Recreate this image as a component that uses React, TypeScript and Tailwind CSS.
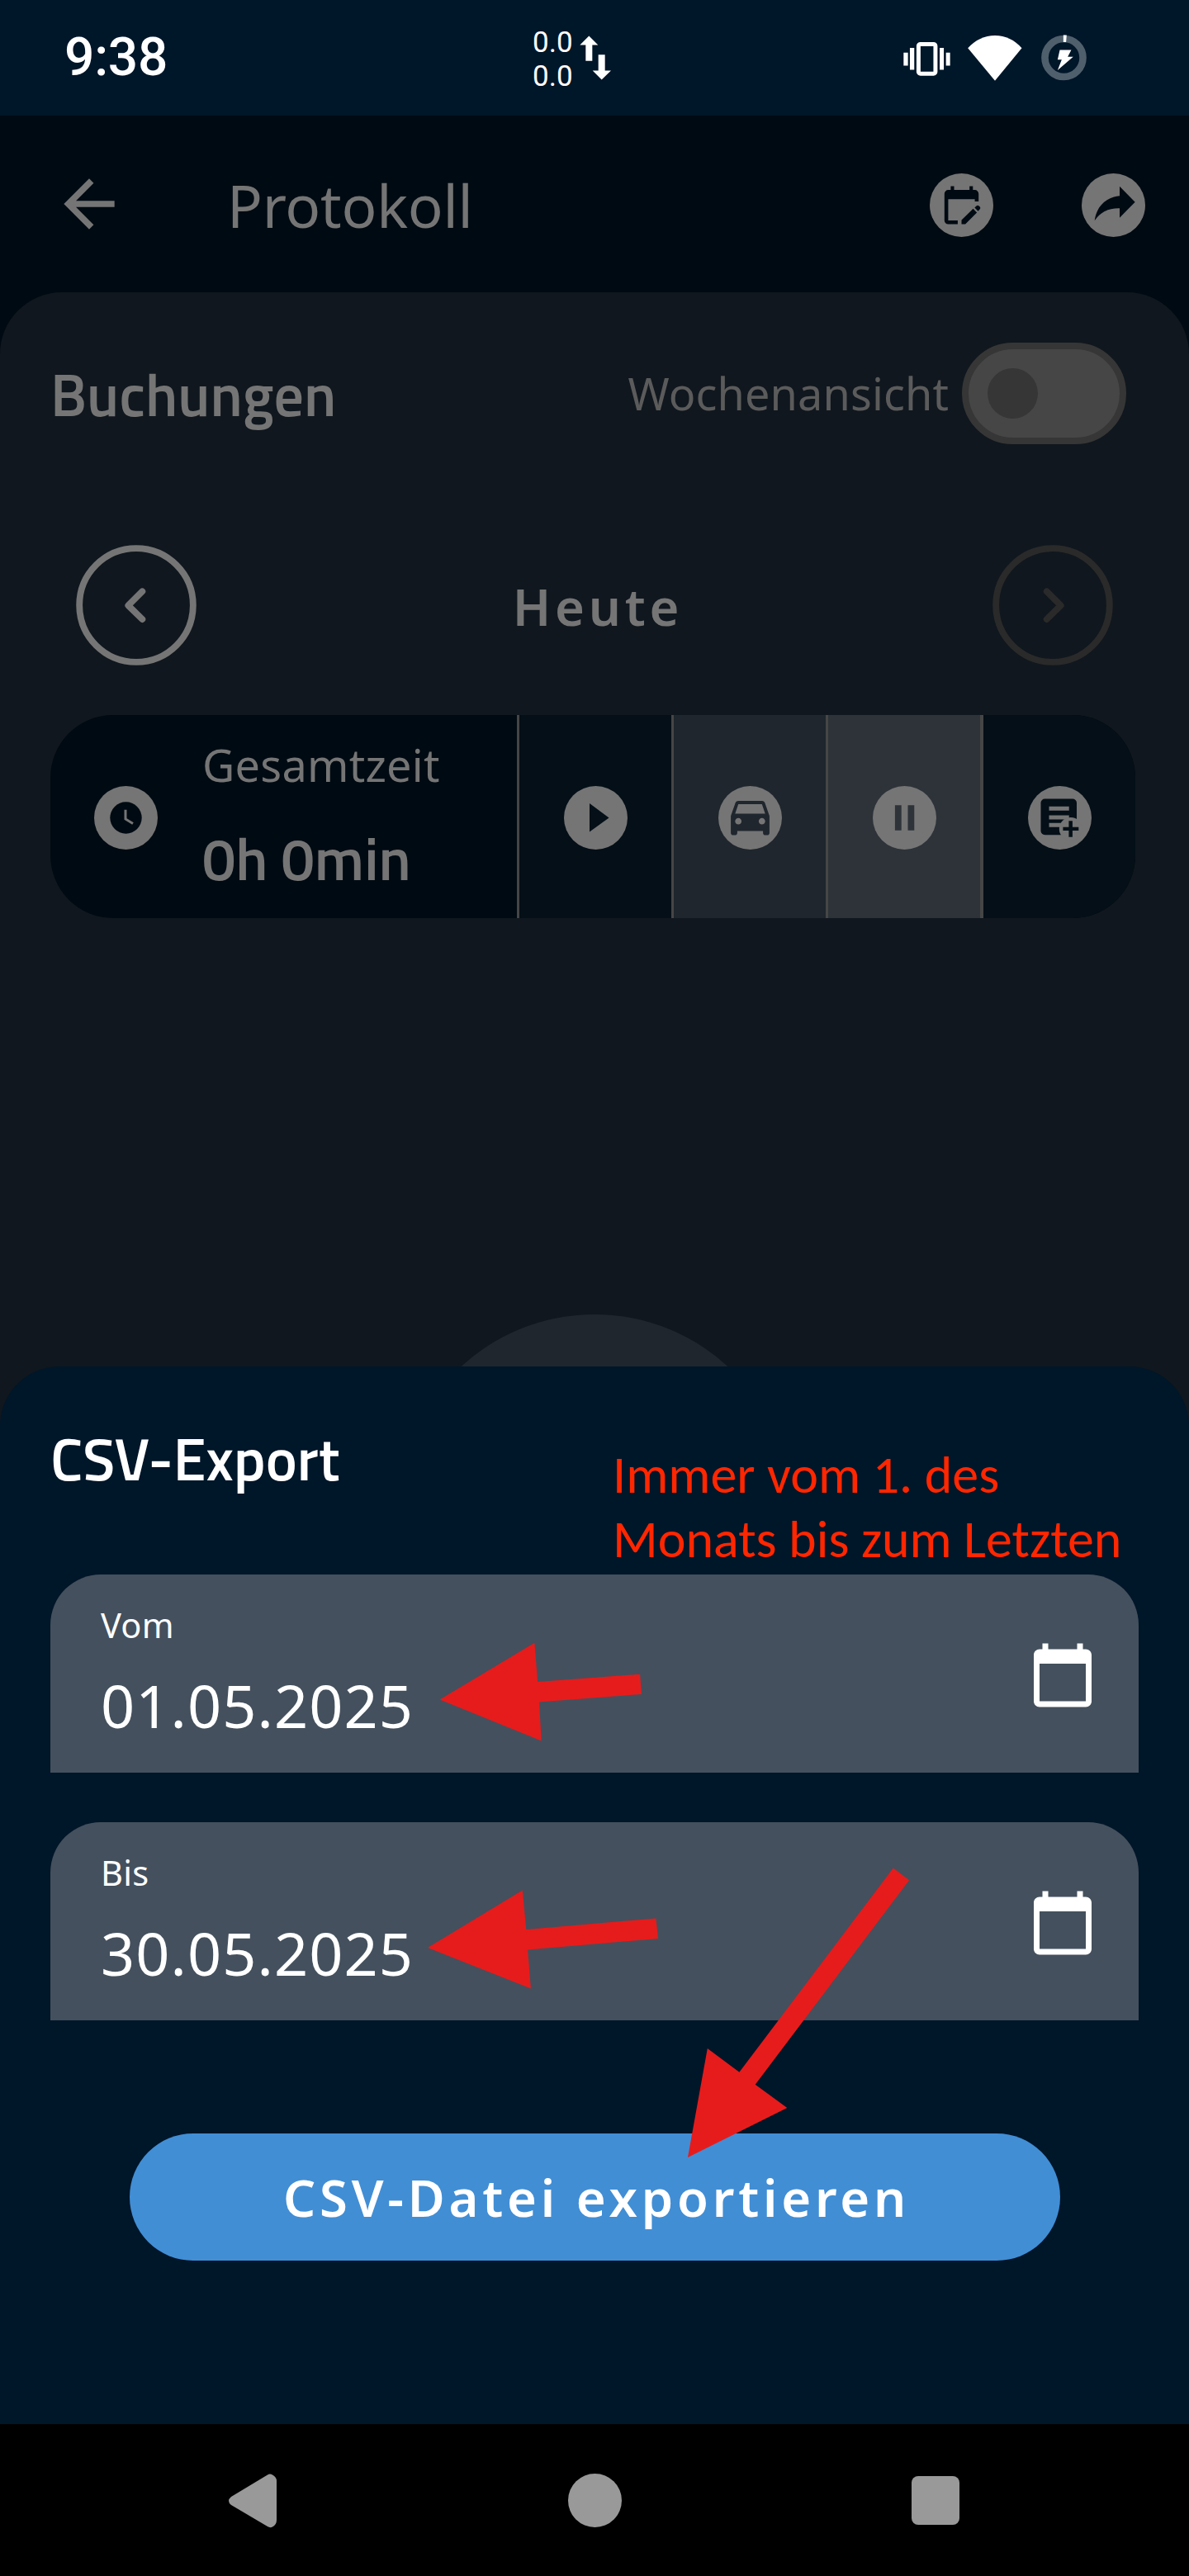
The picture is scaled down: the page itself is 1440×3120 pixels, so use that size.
import type { ReactNode } from "react";

const noto = "font-['Noto_Sans',sans-serif]";
const titillium = "font-['Titillium_Web',Roboto,sans-serif] font-semibold";

function StatusBar() {
  return (
    <div className="flex h-[140px] items-center bg-[#001629] font-['Roboto',sans-serif] text-white">
      <div className="w-[645px] pl-[78px] text-[64px] leading-none font-medium tracking-[-0.25px]">9:38</div>
      <div className="w-[57px] pt-[3px] text-[35px] leading-[41px]">
        <div>0.0</div>
        <div>0.0</div>
      </div>
      <svg className="h-[54px] w-[38px]" viewBox="216 68 114 161" fill="#fff">
        <path d="M250 69l33 33h-21v58h-24v-58h-21zM296 228l-33-33h21v-58h24v58h22z" />
      </svg>
      <div className="ml-auto flex items-center pr-[124px]">
        <svg className="mr-[21px] h-[55px] w-[57px]" viewBox="98 66 172 166" fill="#fff">
          <rect x="153.500" y="97.500" width="62" height="108" rx="7" fill="none" stroke="#fff" strokeWidth="15" />
          <path d="M122 111h16v80h-16zM99 129h16v47h-16zM231 111h15v80h-15zM254 129h15v47h-15z" />
        </svg>
        <svg className="mr-[23px] h-[55px] w-[66px]" viewBox="333 66 198 166" fill="#fff">
          <path d="M432 231L333 112C360 82 394 66 432 66s72 16 98 46z" />
        </svg>
        <svg className="h-[56px] w-[55px]" viewBox="600 66 166 168" fill="#fff">
          <circle cx="683" cy="150" r="69.500" fill="none" stroke="#505f6c" strokeWidth="26" />
          <path d="M681 67h12l-2 26h-10zM668 121h42l-13 25h20l-57 49 15-38h-15z" />
        </svg>
      </div>
    </div>
  );
}

/** Grey disc whose glyph is drawn in a 77-unit box centred on the origin. */
function Disc({ children }: { children: ReactNode }) {
  return (
    <svg className="size-[77px] shrink-0" viewBox="-38.5 -38.5 77 77">
      <circle r="38.500" fill="#757575" />
      {children}
    </svg>
  );
}

function AppBar() {
  return (
    <div className="flex h-[214px] items-center pr-[53px] pl-[62px]">
      <svg className="size-[92px]" viewBox="0 0 24 24" fill="#757575">
        <path d="M20 11H7.830l5.590-5.590L12 4l-8 8 8 8 1.410-1.410L7.830 13H20z" />
      </svg>
      <h1 className={`${noto} mt-[3px] ml-[121px] text-[71px] leading-none tracking-[-0.25px] text-[#757575]`}>Protokoll</h1>
      <div className="mt-[3px] ml-auto flex gap-[107px]">
        <Disc>
          <g transform="translate(-27.600 -27.600) scale(2.300)" fill="#000a12">
            <path d="M10 22H5a2 2 0 0 1-2-2V6a2 2 0 0 1 2-2h1.300V2h1.800v2h8.100V2H18v2h1a2 2 0 0 1 2 2v4h-2V8.900H5V20h5z" />
            <path d="M12 22v-2.200l6.100-5.900 2 2L14 22zM18.900 13.300l.9-.9q.7-.6 1.400 0l.4.4q.6.7 0 1.400l-.9.900z" />
          </g>
        </Disc>
        <Disc>
          <g transform="translate(-38.500 -38.500) scale(.3333)">
            <path fill="#000a12" d="M194 104L138 47V82C100 86 55 110 47 172C68 140 98 126 138 127V161z" />
          </g>
        </Disc>
      </div>
    </div>
  );
}

function RoundButton({ color, flip }: { color: string; flip?: boolean }) {
  return (
    <svg className={flip ? "size-[146px] -scale-x-100" : "size-[146px]"} viewBox="-219 -219 438 438" fill="none" stroke={color} strokeWidth="23.500">
      <circle r="206.500" />
      <path d="M22-50L-29 1l51 50" strokeLinecap="round" strokeLinejoin="round" />
    </svg>
  );
}

function SummaryCard() {
  return (
    <div className="mt-[60px] mr-[65px] ml-[61px] flex h-[246px] overflow-hidden rounded-[76px] bg-[#000a12]">
      <div className="flex w-[565px] shrink-0 items-center pt-[2px] pl-[53px]">
        <Disc>
          <circle r="19.200" fill="#000a12" />
          <path d="M-.5-9.700V1.500L8.500 7" fill="none" stroke="#757575" strokeWidth="3" />
        </Disc>
        <div className="-mt-[15px] ml-[54px] text-[#757575]">
          <div className={`${noto} text-[54px] leading-[113px] tracking-[0.25px]`}>Gesamtzeit</div>
          <div className={`${titillium} text-[72px] leading-[113px]`}>0h 0min</div>
        </div>
      </div>
      <div className="flex w-[187px] shrink-0 items-center justify-center border-l-[3px] border-[#464646] bg-[#040f17] pt-[2px]">
        <Disc>
          <path d="M-7.500-17.500V17L16 0z" fill="#040f17" />
        </Disc>
      </div>
      <div className="flex w-[187px] shrink-0 items-center justify-center border-l-[3px] border-[#464646] bg-[#1f262d] pt-[2px]">
        <Disc>
          <g transform="translate(-31.200 -33.500) scale(2.600)">
            <path
              fill="#1f262d"
              d="M18.920 6.010C18.720 5.420 18.160 5 17.500 5h-11c-.66 0-1.210.42-1.420 1.010L3 12v8c0 .55.45 1 1 1h1c.55 0 1-.45 1-1v-1h12v1c0 .55.45 1 1 1h1c.55 0 1-.45 1-1v-8l-2.080-5.990zM6.500 16c-.83 0-1.500-.67-1.500-1.500S5.670 13 6.500 13s1.500.67 1.500 1.500S7.330 16 6.500 16zm11 0c-.83 0-1.500-.67-1.500-1.500s.67-1.500 1.500-1.500 1.500.67 1.500 1.500-.67 1.500-1.500 1.500zM5 11l1.500-4.500h11L19 11H5z"
            />
          </g>
        </Disc>
      </div>
      <div className="flex w-[191px] shrink-0 items-center justify-center border-r-4 border-l-[3px] border-[#464646] bg-[#2d3339] pt-[2px]">
        <Disc>
          <path d="M-11.600-15.300h7.800v30.600h-7.800zM4-15.300h7.800v30.600H4z" fill="#2d3339" />
        </Disc>
      </div>
      <div className="flex flex-1 items-center bg-[#040f17] pt-[2px] pl-[54px]">
        <Disc>
          <rect x="-23" y="-23" width="43.500" height="43.700" rx="5" fill="#040f17" />
          <path d="M-13-13.700h24.200v5H-13zM-13-3h24.200v5H-13zM-13 6.300H2v5h-15z" fill="#757575" />
          <circle cx="13.300" cy="13.500" r="14" fill="#757575" />
          <path d="M10.900 3.700h4.500v7.600h7.400v4.200h-7.400v7.800h-4.500v-7.800H3.900v-4.200h7z" fill="#040f17" />
        </Disc>
      </div>
    </div>
  );
}

function DateField({ label, value }: { label: string; value: string }) {
  return (
    <div className={`${noto} mx-[61px] flex h-[240px] items-center justify-between rounded-t-[61px] bg-[#44505d] pr-[50px] pl-[61px] text-white`}>
      <div>
        <div className="text-[41.5px] leading-[68px] tracking-[0.3px]">{label}</div>
        <div className="mt-[18px] mb-[10px] text-[72px] leading-[90px] tracking-[1.1px]">{value}</div>
      </div>
      <svg className="mt-[3px] size-[84px]" viewBox="0 0 24 24" fill="#fff">
        <path d="M20 3h-1V1h-2v2H7V1H5v2H4c-1.100 0-2 .9-2 2v16c0 1.100.9 2 2 2h16c1.100 0 2-.9 2-2V5c0-1.100-.9-2-2-2zm0 18H4V8h16v13z" />
      </svg>
    </div>
  );
}

function ExportSheet() {
  return (
    <section className="relative h-[1281px] rounded-t-[72px] bg-[#001629]">
      <h2 className={`${titillium} h-[252px] pt-[66px] pl-[61px] text-[72px] leading-[90px] text-white`}>CSV-Export</h2>
      <DateField label="Vom" value="01.05.2025" />
      <div className="h-[60px]" />
      <DateField label="Bis" value="30.05.2025" />
      <button
        className={`${noto} mx-auto mt-[137px] block h-[154px] w-[1127px] rounded-full bg-[#418ed5] pl-[5px] text-[61.5px] font-semibold tracking-[4.8px] text-white`}
      >
        CSV-Datei exportieren
      </button>

      <p className="absolute top-[92px] left-[742px] font-['Carlito',Lato,sans-serif] text-[64px] leading-[78px] whitespace-nowrap text-[#ff2600]">
        Immer vom 1. des
        <br />
        Monats bis zum Letzten
      </p>
      {/* Hand-drawn pointers over the fields and the button */}
      <svg className="absolute top-0 left-0 h-[1281px] w-[1440px]" viewBox="0 1655 1440 1281" fill="#e61c1c">
        <path d="M532.600 2058.600L647.400 1989.800L651.100 2036.900L775.100 2027.800L777 2051.900L653 2061.400L655.700 2108.400z" />
        <path d="M518 2359.100L632.800 2289.500L637.300 2337L794.400 2323.500L797.100 2348L639.200 2361.500L642.900 2408.600z" />
        <path d="M833 2613L856.800 2480.900L895.400 2509.800L1081.800 2262.600L1101.100 2277.300L914.700 2524.800L953.300 2552.900z" />
      </svg>
    </section>
  );
}

function NavBar() {
  return (
    <div className="flex h-[184px] items-start bg-black pt-[60px]">
      <svg className="ml-[277px] h-[66px] w-[58px]" viewBox="0 0 58 66" fill="#999">
        <path d="M3 28L47 1.500Q50-.5 53 1.500Q58 4 58 9V56Q58 62 53 64.500Q50 66 47 64L3 38Q-3 33 3 28z" />
      </svg>
      <div className="ml-[353px] size-[65px] rounded-full bg-[#999]" />
      <div className="mt-[3px] ml-[351px] h-[59px] w-[58px] rounded-[8px] bg-[#999]" />
    </div>
  );
}

export default function App() {
  return (
    <div className="h-[3120px] w-[1440px] overflow-hidden bg-[#000a12]">
      <StatusBar />
      <AppBar />
      <main className="rounded-t-[75px] bg-[#10171e]">
        <div className="flex h-[184px] items-center pt-[61px] pr-[76px] pl-[61px]">
          <h2 className={`${titillium} text-[72px] leading-[90px] text-[#757575]`}>Buchungen</h2>
          <span className={`${noto} mr-[16px] ml-auto -mt-[2px] text-[54px] leading-[80px] tracking-[0.1px] text-[#5b5b5b]`}>Wochenansicht</span>
          <div className="flex h-[123px] w-[199px] items-center rounded-full border-8 border-[#363636] bg-[#464646] pl-[23px]">
            <div className="size-[61px] rounded-full bg-[#363636]" />
          </div>
        </div>
        <div className="mt-[122px] flex h-[146px] items-center justify-between px-[92px]">
          <RoundButton color="#757575" />
          <span className={`${noto} pt-[2px] pl-[8px] text-[61.5px] leading-[80px] font-semibold tracking-[4.8px] text-[#757575]`}>Heute</span>
          <RoundButton color="#2a2a2a" flip />
        </div>
        <SummaryCard />
        <div className="mt-[480px] flex h-[63px] justify-center overflow-hidden">
          <div className="size-[476px] shrink-0 rounded-full bg-[#1f262d]" />
        </div>
        <ExportSheet />
      </main>
      <NavBar />
    </div>
  );
}
